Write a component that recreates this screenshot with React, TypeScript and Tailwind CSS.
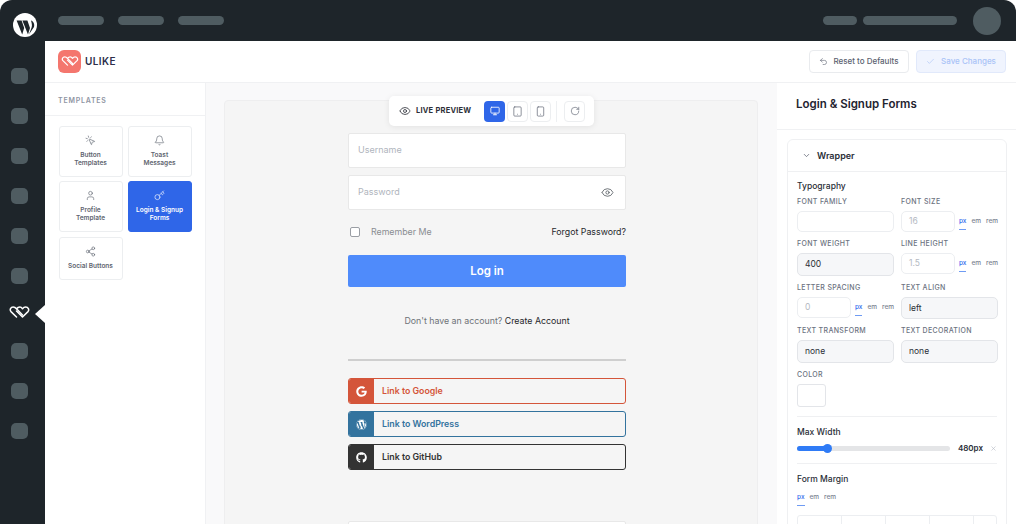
import React from 'react';
import { Eye, Monitor, Tablet, Smartphone, RotateCw, Undo2, Check, ChevronDown, MousePointerClick, Bell, User, Key, Share2, X } from 'lucide-react';
import { FaGoogle, FaGithub, FaWordpress } from 'react-icons/fa';

const UlikeMark = ({ className }: { className?: string }) => (
    <svg viewBox="0 0 21 12" fill="none" className={className} stroke="currentColor" strokeWidth="1.5" strokeLinejoin="round" strokeLinecap="round">
        <path d="M7.5 11 L2 5.6 C0.4 3.8 1.6 1 4.2 1 C5.6 1 6.6 1.7 7.5 2.8 L13.5 9" />
        <path d="M7.5 2.8 C8.4 1.7 9.4 1 10.8 1 C11.8 1 12.8 1.7 13.5 2.8 C14.3 1.7 15.3 1 16.6 1 C19.3 1 20.5 3.8 19 5.6 L13.5 11 L7.5 5" />
    </svg>
);

const WpLogo = () => (
    <svg viewBox="0 0 24 24" className="w-[24px] h-[24px]">
        <circle cx="12" cy="12" r="12" fill="#ffffff" />
        <path d="M3.6 7.4 H8.6 L11.2 15 L9.2 21.5 Z" fill="#1e252a" />
        <path d="M9.4 7.4 H14.4 L17 15 L15 21.5 Z" fill="#1e252a" />
        <path d="M18 7.5 C20 8 22 11 21 14 L15.9 21.6 L18.6 14.6 C19.4 12 18.6 10 18 7.5 Z" fill="#1e252a" />
    </svg>
);

const SideDot = () => <div className="w-[17px] h-[16px] rounded-[5px] bg-[#4f5c61]" />;

const templates = [
    { id: 'button', title: ['Button', 'Templates'], icon: MousePointerClick, height: 'h-[51px]' },
    { id: 'toast', title: ['Toast', 'Messages'], icon: Bell, height: 'h-[51px]' },
    { id: 'profile', title: ['Profile', 'Template'], icon: User, height: 'h-[51px]' },
    { id: 'login', title: ['Login & Signup', 'Forms'], icon: Key, height: 'h-[51px]', active: true },
    { id: 'social', title: ['Social Buttons'], icon: Share2, height: 'h-[43px] mt-[1px]' },
];

const Label = ({ children }: { children: React.ReactNode }) => (
    <div className="text-[7px] leading-[10px] font-medium tracking-[0.05em] text-[#6b7280] uppercase mt-[1px] mb-[4px]">{children}</div>
);

const Units = ({ className = '' }: { className?: string }) => (
    <div className={`flex gap-[5px] text-[6.5px] font-medium text-[#7b8290] ${className}`}>
        <span className="flex flex-col text-[#2f6bed] leading-[9px]">
            px
            <span className="h-px mt-[3px] bg-[#6f9bf3]" />
        </span>
        <span className="leading-[9px]">em</span>
        <span className="leading-[9px]">rem</span>
    </div>
);

const SelectBox = ({ value, height = 'h-[23px]' }: { value: string; height?: string }) => (
    <div className={`${height} rounded-[5px] border border-[#e3e5e9] bg-[#f6f7f9] px-[7px] flex items-center text-[8.5px] text-[#2b2f36]`}>{value}</div>
);

const NumberBox = ({ value, className }: { value: string; className: string }) => (
    <div className={`h-[21px] rounded-[5px] border border-[#eceef1] bg-white px-[7px] flex items-center text-[8.5px] text-[#b4b9c2] ${className}`}>{value}</div>
);

const SocialButton = ({ label, border, block, text, icon: Icon }: { label: string; border: string; block: string; text: string; icon: any }) => (
    <div className={`h-[26px] rounded-[3px] border flex items-stretch overflow-hidden ${border}`}>
        <div className={`w-[25px] flex items-center justify-center text-white ${block}`}>
            <Icon className="w-[11px] h-[11px]" />
        </div>
        <div className={`flex items-center pl-[8px] text-[8.8px] font-semibold ${text}`}>{label}</div>
    </div>
);

export default function App() {
    return (
        <div className="w-[1016px] h-[524px] overflow-hidden bg-white antialiased" style={{ fontFamily: 'Inter, "Liberation Sans", sans-serif' }}>
            <div className="w-full h-full rounded-t-[12px] overflow-hidden bg-[#1e252a] flex flex-col">
                {/* top bar */}
                <div className="h-[41px] shrink-0 flex items-center">
                    <div className="w-[45px] self-start pl-[13px] pt-[13px]">
                        <WpLogo />
                    </div>
                    <div className="flex gap-[14px] ml-[13px]">
                        <div className="w-[46px] h-[9px] rounded-full bg-[#4f5c61]" />
                        <div className="w-[46px] h-[9px] rounded-full bg-[#4f5c61]" />
                        <div className="w-[46px] h-[9px] rounded-full bg-[#4f5c61]" />
                    </div>
                    <div className="ml-auto flex items-center gap-[6px] mr-[15px]">
                        <div className="w-[34px] h-[9px] rounded-full bg-[#4f5c61]" />
                        <div className="w-[94px] h-[9px] rounded-full bg-[#4f5c61]" />
                        <div className="w-[28px] h-[28px] rounded-full bg-[#4f5c61] ml-[10px]" />
                    </div>
                </div>
                <div className="flex flex-1 min-h-0">
                    {/* wp sidebar */}
                    <div className="w-[45px] shrink-0 relative flex flex-col pl-[11px] pt-[27px]">
                        <div className="flex flex-col gap-[24px]">
                            <SideDot /><SideDot /><SideDot /><SideDot /><SideDot /><SideDot />
                        </div>
                        <div className="h-[12px] mt-[22px] mb-[25px] -ml-[2px] flex items-center text-white">
                            <UlikeMark className="w-[21px] h-[12px]" />
                        </div>
                        <div className="flex flex-col gap-[24px]">
                            <SideDot /><SideDot /><SideDot />
                        </div>
                        <div className="absolute right-0 top-[264px] w-0 h-0 border-y-[9px] border-y-transparent border-r-[10px] border-r-white" />
                    </div>
                    <div className="flex-1 min-w-0 bg-white flex flex-col">
                        {/* plugin header */}
                        <div className="h-[42px] shrink-0 border-b border-[#f0f1f3] flex items-center pl-[13px] pr-[10px] pb-[1px]">
                            <div className="w-[23px] h-[23px] rounded-[6px] bg-[#f4766e] flex items-center justify-center text-white">
                                <UlikeMark className="w-[18px] h-[10px]" />
                            </div>
                            <span className="ml-[4px] text-[10px] font-semibold tracking-[0.04em] text-[#2d2f4b]">ULIKE</span>
                            <div className="ml-auto flex gap-[7px]">
                                <div className="h-[23px] w-[100px] rounded-[4px] border border-[#e9ebee] flex items-center justify-center gap-[5px] text-[8px] font-medium text-[#5b6270]">
                                    <Undo2 className="w-[9px] h-[9px]" strokeWidth={1.6} />
                                    Reset to Defaults
                                </div>
                                <div className="h-[23px] w-[90px] rounded-[4px] border border-[#e1e9fb] bg-[#f0f4fe] flex items-center justify-center gap-[6px] text-[8px] font-medium text-[#a9c3f7]">
                                    <Check className="w-[9px] h-[9px]" strokeWidth={1.6} />
                                    Save Changes
                                </div>
                            </div>
                        </div>
                        <div className="flex flex-1 min-h-0">
                            {/* templates */}
                            <div className="w-[161px] shrink-0 border-r border-[#f0f1f3]">
                                <div className="h-[33px] border-b border-[#f0f1f3] pl-[13px] pt-[4px] flex items-center text-[7px] font-semibold tracking-[0.11em] text-[#8f95a3]">TEMPLATES</div>
                                <div className="grid grid-cols-[64px_64px] gap-x-[5px] gap-y-[4px] pl-[13.5px] pt-[10px] items-start">
                                    {templates.map(t => {
                                        const Icon = t.icon;
                                        return (
                                            <div key={t.id} className={`${t.height} rounded-[3px] border flex flex-col items-center pt-[8px] ${t.active ? 'bg-[#2f66e8] border-[#2f66e8] text-white' : 'bg-white border-[#eceef0] text-[#5f6570]'}`}>
                                                <Icon className="w-[11px] h-[11px] mb-[6px]" strokeWidth={1.4} />
                                                <div className="text-[6.5px] leading-[7.5px] font-semibold text-center">
                                                    {t.title.map(line => <div key={line}>{line}</div>)}
                                                </div>
                                            </div>
                                        );
                                    })}
                                </div>
                            </div>
                            {/* preview */}
                            <div className="w-[571px] shrink-0 bg-[#f9f9fa] relative pl-[18px] pt-[17px]">
                                <div className="absolute top-[13px] left-[183px] w-[205px] h-[30px] rounded-[5px] bg-white shadow-[0_1px_6px_rgba(0,0,0,0.08)] flex items-center pl-[10px] z-10">
                                    <Eye className="w-[12px] h-[12px] text-[#2d3038]" strokeWidth={1.6} />
                                    <span className="ml-[5px] w-[56px] whitespace-nowrap text-[7.5px] font-bold tracking-[0.03em] text-[#2d3038]">LIVE PREVIEW</span>
                                    <div className="ml-[12px] w-[21px] h-[21px] rounded-[4px] bg-[#2f66e8] flex items-center justify-center text-white"><Monitor className="w-[10px] h-[10px]" /></div>
                                    <div className="ml-[2px] w-[21px] h-[21px] rounded-[4px] border border-[#eceef0] flex items-center justify-center text-[#5c6270]"><Tablet className="w-[11px] h-[11px]" strokeWidth={1.5} /></div>
                                    <div className="ml-[2px] w-[21px] h-[21px] rounded-[4px] border border-[#eceef0] flex items-center justify-center text-[#5c6270]"><Smartphone className="w-[11px] h-[11px]" strokeWidth={1.5} /></div>
                                    <div className="ml-[5px] w-px h-[21px] bg-[#eef0f2]" />
                                    <div className="ml-[7px] w-[21px] h-[21px] rounded-[4px] border border-[#eceef0] flex items-center justify-center text-[#5c6270]"><RotateCw className="w-[10px] h-[10px]" strokeWidth={1.5} /></div>
                                </div>
                                <div className="w-[534px] h-[500px] bg-[#f5f5f5] border border-[#eeeeef] rounded-t-[4px] pt-[32px] pl-[123px]">
                                    <div className="w-[278px] flex flex-col">
                                        <div className="h-[35px] bg-white border border-[#e8e8e8] rounded-[2px] flex items-center pl-[9px] pb-[2px] text-[9px] text-[#b0b5bd]">Username</div>
                                        <div className="h-[35px] mt-[7px] bg-white border border-[#e8e8e8] rounded-[2px] flex items-center justify-between pl-[9px] pr-[11px] text-[9px] text-[#b0b5bd]">
                                            <span className="pb-[2px]">Password</span>
                                            <Eye className="w-[13px] h-[13px] text-[#5d6268]" strokeWidth={1.6} />
                                        </div>
                                        <div className="flex items-center justify-between mt-[16px] h-[12px] text-[8.8px]">
                                            <div className="flex items-center pl-[2px]">
                                                <div className="w-[10px] h-[10px] rounded-[2px] border border-[#9a9ea4] bg-white" />
                                                <span className="ml-[11px] text-[#8a8d92]">Remember Me</span>
                                            </div>
                                            <span className="text-[#26282c]">Forgot Password?</span>
                                        </div>
                                        <div className="mt-[17px] h-[32px] pt-[1px] rounded-[2px] bg-[#4f8bfb] flex items-center justify-center text-white text-[11.5px] font-semibold">Log in</div>
                                        <div className="mt-[28px] text-center text-[8.8px] leading-[12px] text-[#6f7378]">
                                            Don't have an account? <span className="text-[#26282c]">Create Account</span>
                                        </div>
                                        <div className="mt-[32px] h-[2px] bg-[#cfcfcf]" />
                                        <div className="mt-[17px] flex flex-col gap-[7px]">
                                            <SocialButton label="Link to Google" border="border-[#d4553a]" block="bg-[#d4553a]" text="text-[#d4553a]" icon={FaGoogle} />
                                            <SocialButton label="Link to WordPress" border="border-[#33739e]" block="bg-[#33739e]" text="text-[#33739e]" icon={FaWordpress} />
                                            <SocialButton label="Link to GitHub" border="border-[#333333]" block="bg-[#333333]" text="text-[#333333]" icon={FaGithub} />
                                        </div>
                                        <div className="mt-[51px] h-[35px] bg-white border border-[#e8e8e8] rounded-[2px]" />
                                    </div>
                                </div>
                            </div>
                            {/* settings */}
                            <div className="flex-1 min-w-0 bg-white">
                                <div className="h-[47px] border-b border-[#f0f1f3] pl-[19px] pb-[2px] flex items-center text-[11.5px] font-semibold text-[#1f2430]">Login & Signup Forms</div>
                                <div className="ml-[10px] mr-[9px] mt-[9px] rounded-t-[6px] border border-[#eff0f2]">
                                    <div className="h-[32px] border-b border-[#eff0f2] flex items-center pl-[14px] text-[9px] font-semibold text-[#2a2e37]">
                                        <ChevronDown className="w-[9px] h-[9px] mr-[6px] text-[#5c6270]" />
                                        Wrapper
                                    </div>
                                    <div className="px-[9px] pt-[9px]">
                                        <div className="text-[8.5px] leading-[10px] font-medium text-[#2a2e37] mb-[5px]">Typography</div>
                                        <div className="grid grid-cols-[97px_97px] gap-x-[7px] gap-y-[6px]">
                                            <div>
                                                <Label>Font Family</Label>
                                                <div className="h-[21px] rounded-[5px] border border-[#eceef1] bg-white" />
                                            </div>
                                            <div>
                                                <Label>Font Size</Label>
                                                <div className="flex items-start">
                                                    <NumberBox value="16" className="w-[56px]" />
                                                    <Units className="ml-[4px] mt-[6px]" />
                                                </div>
                                            </div>
                                            <div>
                                                <Label>Font Weight</Label>
                                                <SelectBox value="400" />
                                            </div>
                                            <div>
                                                <Label>Line Height</Label>
                                                <div className="flex items-start">
                                                    <NumberBox value="1.5" className="w-[56px]" />
                                                    <Units className="ml-[4px] mt-[6px]" />
                                                </div>
                                            </div>
                                            <div>
                                                <Label>Letter Spacing</Label>
                                                <div className="flex items-start">
                                                    <NumberBox value="0" className="w-[56px]" />
                                                    <Units className="ml-[4px] mt-[6px]" />
                                                </div>
                                            </div>
                                            <div>
                                                <Label>Text Align</Label>
                                                <SelectBox value="left" height="h-[22px]" />
                                            </div>
                                            <div>
                                                <Label>Text Transform</Label>
                                                <SelectBox value="none" />
                                            </div>
                                            <div>
                                                <Label>Text Decoration</Label>
                                                <SelectBox value="none" />
                                            </div>
                                        </div>
                                        <div className="mt-[7px]">
                                            <Label>Color</Label>
                                            <div className="w-[29px] h-[23px] rounded-[3px] border border-[#e3e5e9] bg-white" />
                                        </div>
                                        <div className="mt-[9px] border-t border-[#eff0f2] pt-[10px]">
                                            <div className="text-[8.5px] leading-[10px] font-medium text-[#2a2e37]">Max Width</div>
                                            <div className="mt-[6px] flex items-center h-[10px]">
                                                <div className="w-[153px] h-[5px] rounded-full bg-[#e4e5e7] relative">
                                                    <div className="w-[30px] h-[5px] rounded-full bg-[#2f7bf6]" />
                                                    <div className="absolute left-[26px] top-[-2px] w-[9px] h-[9px] rounded-full bg-[#2f7bf6]" />
                                                </div>
                                                <span className="ml-[8px] text-[8px] font-semibold text-[#2a2e37]">480px</span>
                                                <X className="ml-[7px] w-[7px] h-[7px] text-[#b4b9c2]" />
                                            </div>
                                        </div>
                                        <div className="mt-[10px] border-t border-[#eff0f2] pt-[10px]">
                                            <div className="text-[8.5px] leading-[10px] font-medium text-[#2a2e37]">Form Margin</div>
                                            <Units className="mt-[9px]" />
                                            <div className="mt-[9px] h-[24px] rounded-t-[3px] border border-[#eceef1] grid grid-cols-[44px_44px_44px_44px_1fr] divide-x divide-[#eceef1]">
                                                <div /><div /><div /><div /><div />
                                            </div>
                                        </div>
                                    </div>
                                </div>
                            </div>
                        </div>
                    </div>
                </div>
            </div>
        </div>
    );
}
